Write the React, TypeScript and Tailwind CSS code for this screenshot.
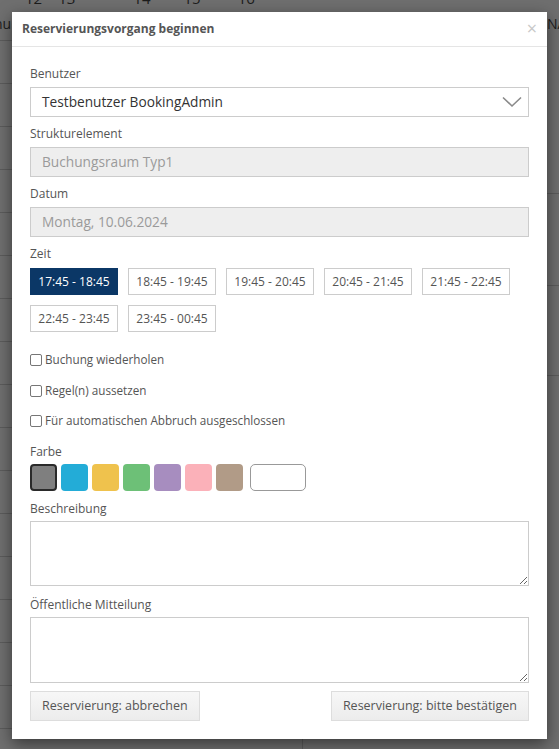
import React from "react";

const TIMES = [
  "17:45 - 18:45",
  "18:45 - 19:45",
  "19:45 - 20:45",
  "20:45 - 21:45",
  "21:45 - 22:45",
  "22:45 - 23:45",
  "23:45 - 00:45",
];

const SWATCHES = [
  "bg-[#7f7f7f] border-2 border-[#2a2a2a]",
  "bg-[#23acd7]",
  "bg-[#efc24d]",
  "bg-[#6dc077]",
  "bg-[#a78dbf]",
  "bg-[#fbb1b9]",
  "bg-[#b19b87]",
];

const CHECKS = [
  "Buchung wiederholen",
  "Regel(n) aussetzen",
  "Für automatischen Abbruch ausgeschlossen",
];

function Label({ children }: { children: React.ReactNode }) {
  return <div className="text-[12px] leading-[18px] text-[#555]">{children}</div>;
}

// dimmed calendar page behind the modal
function Backdrop() {
  const rows = Array.from({ length: 17 });
  return (
    <div className="absolute inset-0 bg-[#6f6f6f] overflow-hidden flex flex-col">
      <div className="h-[12px] flex items-end text-[15px] leading-none text-[#1c1c1c] -mt-[6px]">
        <span className="ml-[25px]">12</span>
        <span className="ml-[16px]">13</span>
        <span className="ml-[58px]">14</span>
        <span className="ml-[33px]">15</span>
        <span className="ml-[37px]">16</span>
      </div>
      <div className="flex-1 flex justify-between">
        <div className="w-[12px] flex flex-col">
          <div className="h-[35px] border-b border-[#5c5c5c] flex items-center text-[14px] text-[#1c1c1c] -ml-[6px]">nu</div>
          {rows.map((_, i) => (
            <div key={i} className="h-[43px] shrink-0 border-b border-[#5c5c5c]" />
          ))}
        </div>
        <div className="w-[12px] flex flex-col">
          <div className="h-[35px] flex items-center text-[14px] text-[#1c1c1c] -mr-[6px]">NA</div>
          <div className="h-[153px] border-b border-[#5c5c5c]" />
          <div className="h-[92px] border-b border-[#5c5c5c]" />
          <div className="h-[90px] border-b border-[#5c5c5c]" />
        </div>
      </div>
    </div>
  );
}

export default function App() {
  return (
    <div
      className="relative w-[559px] h-[749px] overflow-hidden"
      style={{ fontFamily: '"Open Sans", "Liberation Sans", sans-serif' }}
    >
      <Backdrop />
      <div className="absolute left-[302px] top-[738px] w-px h-[12px] bg-[#5c5c5c]" />
      <div className="absolute left-[12px] top-[12px] w-[535px] bg-white shadow-[0_5px_15px_rgba(0,0,0,0.5)]">
        {/* header */}
        <div className="h-[35px] flex items-center justify-between px-[10px] border-b border-[#e5e5e5]">
          <span className="text-[12px] font-bold text-[#555]">Reservierungsvorgang beginnen</span>
          <span className="text-[18px] leading-none text-[#c8c8c8] -mt-[2px]">×</span>
        </div>

        {/* body */}
        <div className="px-[18px] pt-[18px] pb-[18px] flex flex-col">
          <Label>Benutzer</Label>
          <div className="mt-[4px] h-[30px] border border-[#ccc] flex items-center justify-between pl-[11px] pr-[6px]">
            <span className="text-[13.7px] text-[#333]">Testbenutzer BookingAdmin</span>
            <svg width="20" height="12" viewBox="0 0 20 12">
              <polyline points="1,1.5 10,10 19,1.5" fill="none" stroke="#8a8a8a" strokeWidth="1.6" />
            </svg>
          </div>

          <div className="mt-[8px]">
            <Label>Strukturelement</Label>
          </div>
          <div className="mt-[4px] h-[30px] border border-[#ccc] bg-[#eee] flex items-center pl-[11px]">
            <span className="text-[13.7px] text-[#9a9a9a]">Buchungsraum Typ1</span>
          </div>

          <div className="mt-[8px]">
            <Label>Datum</Label>
          </div>
          <div className="mt-[4px] h-[30px] border border-[#ccc] bg-[#eee] flex items-center pl-[11px]">
            <span className="text-[13.7px] text-[#9a9a9a]">Montag, 10.06.2024</span>
          </div>

          <div className="mt-[8px]">
            <Label>Zeit</Label>
          </div>
          <div className="mt-[5px] flex flex-wrap gap-[10px] w-[490px]">
            {TIMES.map((t, i) => (
              <div
                key={t}
                className={`h-[27px] w-[88px] flex items-center justify-center text-[12px] border ${
                  i === 0 ? "bg-[#0b3766] border-[#0b3766] text-white" : "border-[#ccc] text-[#555]"
                }`}
              >
                {t}
              </div>
            ))}
          </div>

          <div className="mt-[19px] flex flex-col gap-[12.5px]">
            {CHECKS.map((c) => (
              <div key={c} className="h-[18px] flex items-center gap-[3px]">
                <span className="w-[12px] h-[12px] border border-[#767676] rounded-[2px] bg-white" />
                <span className="text-[11.7px] text-[#555]">{c}</span>
              </div>
            ))}
          </div>

          <div className="mt-[13px]">
            <Label>Farbe</Label>
          </div>
          <div className="mt-[3px] flex gap-[4px]">
            {SWATCHES.map((s) => (
              <div key={s} className={`w-[27px] h-[27px] rounded-[4px] ${s}`} />
            ))}
            <div className="ml-[3px] w-[56px] h-[27px] rounded-[5px] border border-[#999] bg-white" />
          </div>

          <div className="mt-[9px]">
            <Label>Beschreibung</Label>
          </div>
          <textarea className="mt-[3px] block w-full h-[65px] border border-[#ccc] outline-none" />

          <div className="mt-[10px]">
            <Label>Öffentliche Mitteilung</Label>
          </div>
          <textarea className="mt-[3px] block w-full h-[66px] border border-[#ccc] outline-none" />

          <div className="mt-[8px] flex justify-between">
            <div className="h-[30px] px-[11px] flex items-center border border-[#ddd] bg-gradient-to-b from-[#f7f7f7] to-[#ececec] text-[12.5px] text-[#555]">
              Reservierung: abbrechen
            </div>
            <div className="h-[30px] px-[11px] flex items-center border border-[#ddd] bg-gradient-to-b from-[#f7f7f7] to-[#ececec] text-[12.5px] text-[#555]">
              Reservierung: bitte bestätigen
            </div>
          </div>
        </div>
      </div>
    </div>
  );
}
